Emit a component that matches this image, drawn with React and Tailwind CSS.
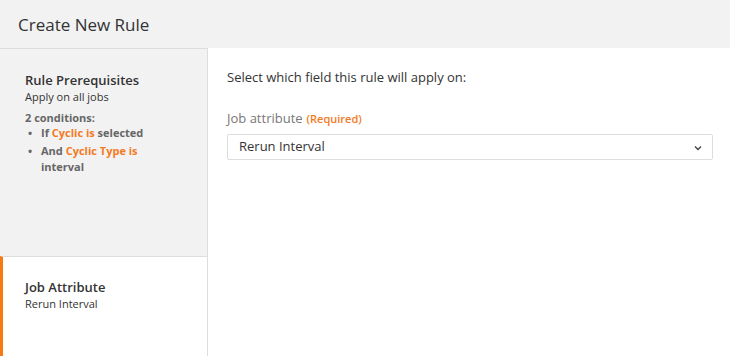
export default function App() {
  return (
    <div
      className="w-[730px] h-[356px] bg-white flex flex-col overflow-hidden"
      style={{ fontFamily: '"Open Sans", sans-serif' }}
    >
      {/* Header */}
      <header className="h-[48px] shrink-0 bg-[#f2f2f2] flex items-center px-[18px]">
        <h1 className="text-[17px] text-[#333] leading-none">Create New Rule</h1>
      </header>

      <div className="flex flex-1 min-h-0">
        {/* Sidebar */}
        <aside className="w-[208px] shrink-0 flex flex-col border-r border-[#dddddd]">
          <div className="h-[208px] bg-[#f2f2f2] border-t border-[#dddddd] px-[25px] pt-[22px]">
            <div className="text-[13px] font-semibold text-[#333] leading-[18px]">Rule Prerequisites</div>
            <div className="text-[11px] text-[#333] leading-[16px]">Apply on all jobs</div>
            <div className="mt-[5px] text-[11px] font-bold text-[#666] leading-[15px]">2 conditions:</div>
            <ul className="text-[11px] font-bold text-[#666] leading-[16px]">
              <li className="flex">
                <span className="w-[16px] shrink-0 pl-[3px]">•</span>
                <span>
                  If <span className="text-[#f47a1f]">Cyclic is</span> selected
                </span>
              </li>
              <li className="flex mt-[2px]">
                <span className="w-[16px] shrink-0 pl-[3px]">•</span>
                <span className="w-[110px]">
                  And <span className="text-[#f47a1f]">Cyclic Type is</span> interval
                </span>
              </li>
            </ul>
          </div>
          <div className="flex-1 border-t border-[#dddddd] border-l-[3px] border-l-[#f57a12] pl-[22px] pt-[21px]">
            <div className="text-[13px] font-semibold text-[#333] leading-[18px]">Job Attribute</div>
            <div className="text-[11px] text-[#333] leading-[16px]">Rerun Interval</div>
          </div>
        </aside>

        {/* Main */}
        <main className="flex-1 pl-[19px] pr-[17px] pt-[20px]">
          <p className="text-[13px] text-[#333] leading-[18px]">Select which field this rule will apply on:</p>
          <div className="mt-[23px] flex items-baseline gap-[4px] leading-[18px]">
            <span className="text-[13px] text-[#777]">Job attribute</span>
            <span className="text-[11px] font-semibold text-[#f47a1f]">(Required)</span>
          </div>
          <div className="mt-[6px] h-[26px] border border-[#dddddd] rounded-[2px] flex items-center justify-between pl-[11px] pr-[10px]">
            <span className="text-[13px] text-[#333]">Rerun Interval</span>
            <svg width="8" height="6" viewBox="0 0 8 6" className="mt-[1px]">
              <path d="M1 1.5 L4 4.5 L7 1.5" fill="none" stroke="#444" strokeWidth="1.4" />
            </svg>
          </div>
        </main>
      </div>
    </div>
  );
}
